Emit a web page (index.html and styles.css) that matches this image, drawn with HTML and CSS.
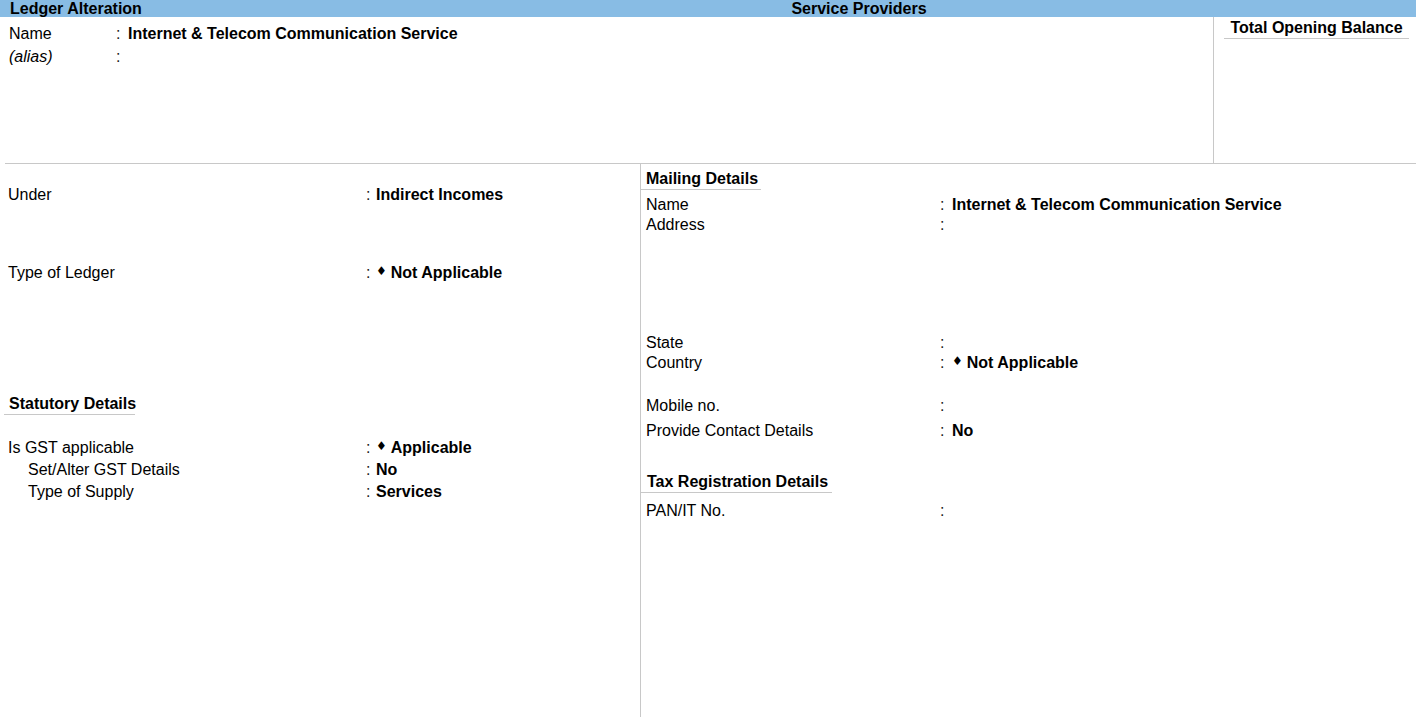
FILE: index.html
```html
<!DOCTYPE html>
<html>
<head>
<meta charset="utf-8">
<title>Ledger Alteration</title>
<link rel="stylesheet" href="styles.css">
</head>
<body>
<div class="screen">
  <header class="titlebar">
    <div class="title-left">Ledger Alteration</div>
    <div class="title-center">Service Providers</div>
  </header>

  <section class="top">
    <div class="top-main">
      <div class="row top-row">
        <span class="label">Name</span><span class="colon">:</span><span class="value">Internet &amp; Telecom Communication Service</span>
      </div>
      <div class="row top-row">
        <span class="label italic">(alias)</span><span class="colon">:</span><span class="value"></span>
      </div>
    </div>
    <aside class="balance-box">
      <div class="balance-title">Total Opening Balance</div>
    </aside>
  </section>

  <section class="bottom">
    <div class="col-left">
      <div class="row lrow r-under">
        <span class="label">Under</span><span class="colon">:</span><span class="value">Indirect Incomes</span>
      </div>
      <div class="row lrow r-type">
        <span class="label">Type of Ledger</span><span class="colon">:</span><span class="value"><span class="diamond">&#9830;</span>Not Applicable</span>
      </div>
      <div class="heading h-stat">Statutory Details</div>
      <div class="row lrow r-gst">
        <span class="label">Is GST applicable</span><span class="colon">:</span><span class="value"><span class="diamond">&#9830;</span>Applicable</span>
      </div>
      <div class="row lrow r-tight">
        <span class="label indent">Set/Alter GST Details</span><span class="colon">:</span><span class="value">No</span>
      </div>
      <div class="row lrow r-tight">
        <span class="label indent">Type of Supply</span><span class="colon">:</span><span class="value">Services</span>
      </div>
    </div>

    <div class="col-right">
      <div class="heading h-mail">Mailing Details</div>
      <div class="row rrow r-mname">
        <span class="label">Name</span><span class="colon">:</span><span class="value">Internet &amp; Telecom Communication Service</span>
      </div>
      <div class="row rrow">
        <span class="label">Address</span><span class="colon">:</span><span class="value"></span>
      </div>
      <div class="row rrow r-state">
        <span class="label">State</span><span class="colon">:</span><span class="value"></span>
      </div>
      <div class="row rrow">
        <span class="label">Country</span><span class="colon">:</span><span class="value"><span class="diamond">&#9830;</span>Not Applicable</span>
      </div>
      <div class="row rrow r-mobile">
        <span class="label">Mobile no.</span><span class="colon">:</span><span class="value"></span>
      </div>
      <div class="row rrow r-contact">
        <span class="label">Provide Contact Details</span><span class="colon">:</span><span class="value">No</span>
      </div>
      <div class="heading h-tax">Tax Registration Details</div>
      <div class="row rrow r-pan">
        <span class="label">PAN/IT No.</span><span class="colon">:</span><span class="value"></span>
      </div>
    </div>
  </section>
</div>
</body>
</html>
```

FILE: styles.css
```css
* { box-sizing: border-box; }

html, body {
  margin: 0;
  padding: 0;
  background: #ffffff;
}

body {
  font-family: "Liberation Sans", Arial, sans-serif;
  font-size: 16px;
  color: #000;
  width: 1416px;
  height: 717px;
  overflow: hidden;
}

.screen {
  display: flex;
  flex-direction: column;
  height: 717px;
}

/* title bar */
.titlebar {
  display: grid;
  grid-template-columns: 302px 1fr;
  height: 17px;
  background: #88bce4;
  font-weight: bold;
  line-height: 17px;
}
.title-left { padding-left: 10px; }
.title-center { text-align: center; }

/* top section */
.top {
  display: flex;
  height: 146px;
}
.top-main {
  flex: 1;
  padding-top: 7px;
}
.balance-box {
  width: 203px;
  border-left: 1px solid #c8c8c8;
  padding-left: 10px;
  padding-right: 7px;
}
.balance-title {
  font-weight: bold;
  text-align: center;
  line-height: 20px;
  padding-top: 1px;
  border-bottom: 1px solid #c8c8c8;
}

/* generic rows */
.row {
  display: grid;
  line-height: 20px;
}
.label { white-space: nowrap; }
.colon { color: #222; }
.value { font-weight: bold; white-space: nowrap; }
.italic { font-style: italic; }
.indent { padding-left: 20px; }

.diamond {
  font-size: 12px;
  line-height: 0;
  vertical-align: 3px;
  margin-right: 4px;
  font-family: "DejaVu Sans", sans-serif;
}

.top-row {
  grid-template-columns: 107px 12px 1fr;
  padding-left: 9px;
  height: 23px;
}

/* bottom section */
.bottom {
  flex: 1;
  display: flex;
  margin-left: 5px;
  border-top: 1px solid #c8c8c8;
}
.col-left {
  width: 636px;
  border-right: 1px solid #c8c8c8;
  display: flex;
  flex-direction: column;
}
.col-right {
  flex: 1;
  display: flex;
  flex-direction: column;
}

.heading {
  font-weight: bold;
  line-height: 20px;
  white-space: nowrap;
  border-bottom: 1px solid #c8c8c8;
  align-self: flex-start;
}

.lrow {
  grid-template-columns: 358px 10px 1fr;
  padding-left: 3px;
  height: 20px;
}
.r-under { margin-top: 21px; }
.r-type { margin-top: 58px; }
.h-stat {
  margin-top: 111px;
  margin-left: -1px;
  padding-left: 5px;
  width: 131px;
}
.r-gst { margin-top: 23px; height: 22px; }
.r-tight { height: 22px; }

.rrow {
  grid-template-columns: 294px 12px 1fr;
  padding-left: 5px;
  height: 20px;
}
.h-mail {
  margin-top: 5px;
  padding-left: 5px;
  width: 120px;
}
.r-mname { margin-top: 5px; }
.r-state { margin-top: 98px; }
.r-mobile { margin-top: 23px; }
.r-contact { margin-top: 5px; }
.h-tax {
  margin-top: 31px;
  padding-left: 6px;
  width: 191px;
}
.r-pan { margin-top: 8px; }
```
